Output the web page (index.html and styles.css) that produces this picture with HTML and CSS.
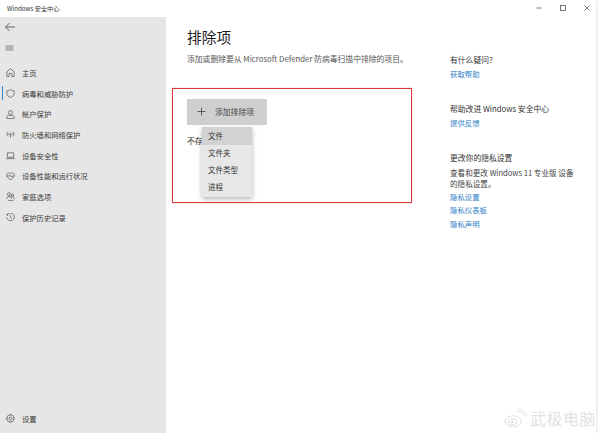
FILE: index.html
```html
<!DOCTYPE html>
<html lang="zh-CN">
<head>
<meta charset="utf-8">
<title>Windows 安全中心</title>
<link rel="stylesheet" href="styles.css">
</head>
<body>
<div class="window">
  <header class="titlebar">
    <span class="app-title">Windows 安全中心</span>
    <div class="win-controls">
      <svg class="win-icon" viewBox="0 0 10 10"><path d="M2.500 5h5" /></svg>
      <svg class="win-icon" viewBox="0 0 10 10"><rect x="2.500" y="2.500" width="5" height="5" /></svg>
      <svg class="win-icon" viewBox="0 0 10 10"><path d="M2.500 2.500l5 5M7.500 2.500l-5 5" /></svg>
    </div>
  </header>
  <div class="body">
    <nav class="sidebar">
      <div class="side-top">
        <svg class="tool-icon" viewBox="0 0 12 12"><path d="M11 6H1.500M5.500 2L1.500 6l4 4" /></svg>
        <svg class="tool-icon menu-icon" viewBox="0 0 12 12"><path d="M1.500 4h8M1.500 6h8M1.500 8h8" /></svg>
      </div>
      <ul class="nav-list">
        <li class="nav-item">
          <svg class="nav-icon" viewBox="0 0 10 10"><path d="M1 9.500V4.200L5 .8l4 3.400v5.300H6.500V6h-3v3.500z" /></svg>
          <span>主页</span>
        </li>
        <li class="nav-item active">
          <svg class="nav-icon" viewBox="0 0 10 10"><path d="M5 .7c1.200 1 2.600 1.400 4 1.400v3c0 2-1.700 3.400-4 4.300-2.300-.9-4-2.300-4-4.300v-3c1.400 0 2.800-.4 4-1.400z" /></svg>
          <span>病毒和威胁防护</span>
        </li>
        <li class="nav-item">
          <svg class="nav-icon" viewBox="0 0 10 10"><circle cx="5" cy="2.800" r="2.200" /><path d="M1 9.500V7.700c0-1 .8-1.700 1.800-1.700h4.400c1 0 1.800.7 1.800 1.700v1.800z" /></svg>
          <span>帐户保护</span>
        </li>
        <li class="nav-item">
          <svg class="nav-icon" viewBox="0 0 10 10"><path d="M5 3.500v5M2 2C.8 3.400.8 5.600 2 7M8 2c1.200 1.400 1.200 3.600 0 5M3.500 3.200c-.6.8-.6 1.800 0 2.600M6.500 3.200c.6.8.6 1.800 0 2.600" /></svg>
          <span>防火墙和网络保护</span>
        </li>
        <li class="nav-item">
          <svg class="nav-icon" viewBox="0 0 10 10"><path d="M1.500 2h7v5h-7zM0 8.500h10" /></svg>
          <span>设备安全性</span>
        </li>
        <li class="nav-item">
          <svg class="nav-icon" viewBox="0 0 10 10"><path d="M5 9L1.200 5.200C-.3 3.500 1 1 3 1c.9 0 1.600.4 2 1 .4-.6 1.100-1 2-1 2 0 3.300 2.500 1.800 4.200zM.8 4.500h2.700l1-1 1.200 2 .8-1h2.700" /></svg>
          <span>设备性能和运行状况</span>
        </li>
        <li class="nav-item">
          <svg class="nav-icon" viewBox="0 0 10 10"><circle cx="3.300" cy="2.500" r="1.700" /><circle cx="7.200" cy="3.500" r="1.300" /><path d="M.7 7.500C.7 6 1.800 5 3.300 5s2.600 1 2.600 2.500M5.500 5.500c1.700-.8 3.800 0 3.800 2M2 9c2 .8 4.500.8 6.500-.2" /></svg>
          <span>家庭选项</span>
        </li>
        <li class="nav-item">
          <svg class="nav-icon" viewBox="0 0 10 10"><path d="M1.200 2.200A4.300 4.300 0 1 1 .7 5M1 .8v1.700h1.700M5 2.600V5l1.700 1.200" /></svg>
          <span>保护历史记录</span>
        </li>
      </ul>
      <div class="nav-item settings">
        <svg class="nav-icon" viewBox="0 0 10 10"><circle cx="5" cy="5" r="1.500" /><path d="M4.200.6h1.600l.3 1.400 1.300-.6 1.100 1.100-.6 1.300 1.400.4v1.600l-1.400.3.600 1.300-1.100 1.100-1.300-.6-.3 1.400H4.200l-.4-1.400-1.300.6-1.100-1.100.6-1.300L.6 5.800V4.200L2 3.800l-.6-1.300 1.100-1.100 1.300.6z" /></svg>
        <span>设置</span>
      </div>
    </nav>
    <main class="content">
      <section class="main-col">
        <h1 class="page-title">排除项</h1>
        <p class="page-desc">添加或删除要从 Microsoft Defender 防病毒扫描中排除的项目。</p>
        <div class="add-row">
          <button class="add-btn">
            <svg class="plus" viewBox="0 0 9 9"><path d="M4.500.5v8M.5 4.500h8" /></svg>
            <span>添加排除项</span>
          </button>
          <ul class="menu">
            <li class="menu-item current">文件</li>
            <li class="menu-item">文件夹</li>
            <li class="menu-item">文件类型</li>
            <li class="menu-item">进程</li>
          </ul>
        </div>
        <p class="empty">不存在任何排除项</p>
      </section>
      <aside class="side-col">
        <div class="info">
          <h2 class="info-title">有什么疑问?</h2>
          <a class="info-link">获取帮助</a>
        </div>
        <div class="info">
          <h2 class="info-title">帮助改进 Windows 安全中心</h2>
          <a class="info-link">提供反馈</a>
        </div>
        <div class="info">
          <h2 class="info-title">更改你的隐私设置</h2>
          <p class="info-text">查看和更改 Windows 11 专业版 设备的隐私设置。</p>
          <a class="info-link">隐私设置</a>
          <a class="info-link">隐私仪表板</a>
          <a class="info-link">隐私声明</a>
        </div>
      </aside>
    </main>
  </div>
  <div class="red-box"></div>
  <div class="watermark">
    <svg class="weibo" viewBox="0 0 24 20"><ellipse cx="9.500" cy="13" rx="8.500" ry="5.800" /><ellipse cx="9" cy="13.500" rx="4.500" ry="3" /><circle cx="8.500" cy="13.800" r="1.200" /><path d="M14 3c3-1 6 .5 6.500 3.500M15 .8c4.500-.7 8 2.500 8 6.700" /></svg>
    <span>武极电脑</span>
  </div>
</div>
</body>
</html>
```

FILE: styles.css
```css
* { box-sizing: border-box; }
html, body { margin: 0; padding: 0; }
body {
  width: 600px;
  height: 433px;
  overflow: hidden;
  background: #fff;
  font-family: "Noto Sans CJK SC", "Noto Sans", sans-serif;
  color: #333;
}
ul { list-style: none; margin: 0; padding: 0; }
p, h1, h2 { margin: 0; font-weight: 400; }

.window {
  position: relative;
  width: 596px;
  height: 433px;
  display: flex;
  flex-direction: column;
  box-shadow: 1px 0 2px #e4e4e4;
}

.titlebar {
  height: 17px;
  flex: none;
  display: flex;
  align-items: center;
  justify-content: space-between;
  padding: 0 4px 0 7px;
}
.app-title { font-size: 6.200px; color: #333; line-height: 17px; }
.win-controls { display: flex; gap: 14px; margin-top: -1px; }
.win-icon {
  width: 10px;
  height: 10px;
  fill: none;
  stroke: #666;
  stroke-width: 0.9;
}

.body { flex: 1; display: flex; min-height: 0; }

.sidebar {
  width: 166px;
  flex: none;
  background: #e6e6e6;
  display: flex;
  flex-direction: column;
  padding-top: 4px;
  padding-bottom: 4px;
}
.side-top {
  display: flex;
  flex-direction: column;
  gap: 8.500px;
  padding-left: 4px;
}
.tool-icon {
  width: 12px;
  height: 12px;
  fill: none;
  stroke: #555;
  stroke-width: 0.9;
}
.menu-icon { stroke: #777; }
.nav-list { margin-top: 9px; }
.nav-item {
  height: 20.700px;
  display: flex;
  align-items: center;
  gap: 7px;
  padding-left: 6px;
  font-size: 7.300px;
  color: #3a3a3a;
  position: relative;
}
.nav-item.active::before {
  content: "";
  position: absolute;
  left: 2px;
  top: 3px;
  bottom: 4px;
  width: 1px;
  background: #2f86d0;
}
.nav-icon {
  width: 9px;
  height: 9px;
  flex: none;
  fill: none;
  stroke: #555;
  stroke-width: 0.8;
}
.settings { margin-top: auto; }

.content { flex: 1; display: flex; min-width: 0; }
.main-col {
  width: 284px;
  flex: none;
  padding: 10px 0 0 21px;
}
.page-title {
  font-size: 14.700px;
  line-height: 20px;
  color: #1a1a1a;
}
.page-desc {
  margin-top: 6px;
  font-size: 7.800px;
  line-height: 11px;
  color: #555;
  white-space: nowrap;
}
.add-row { position: relative; margin-top: 35px; }
.add-btn {
  width: 80px;
  height: 25.500px;
  border: 0;
  padding: 0 0 0 10px;
  background: #cfcfcf;
  display: flex;
  align-items: center;
  gap: 9px;
  font-family: inherit;
  font-size: 7.800px;
  color: #444;
}
.plus {
  width: 9px;
  height: 9px;
  fill: none;
  stroke: #444;
  stroke-width: 0.8;
  flex: none;
}
.menu {
  position: absolute;
  left: 15px;
  top: 28px;
  width: 50px;
  height: 70px;
  background: #e7e7e7;
  box-shadow: 0 2px 5px rgba(0, 0, 0, 0.3);
  border-radius: 1px;
}
.menu-item {
  height: 16.800px;
  padding-left: 6px;
  font-size: 7.500px;
  line-height: 16.800px;
  color: #333;
}
.menu-item.current { height: 18px; line-height: 18.500px; background: #d2d2d2; }
.empty {
  margin-top: 10px;
  font-size: 7.800px;
  line-height: 11px;
  color: #222;
  white-space: nowrap;
}

.side-col { flex: 1; padding: 37px 0 0 0; }
.info { margin-bottom: 24.500px; width: 128px; }
.info-title {
  font-size: 7.800px;
  line-height: 11px;
  color: #333;
  white-space: nowrap;
}
.info-text {
  margin-top: 4px;
  margin-bottom: -1px;
  font-size: 7.600px;
  line-height: 11px;
  color: #444;
}
.info-link {
  display: block;
  margin-top: 2.500px;
  font-size: 7.400px;
  line-height: 11px;
  color: #2f7fc8;
}

.red-box {
  position: absolute;
  left: 172px;
  top: 88px;
  width: 240px;
  height: 115px;
  border: 1px solid #d83a3a;
  box-shadow: 0 0 1px #e88;
}

.watermark {
  position: absolute;
  left: 504px;
  top: 408px;
  display: flex;
  align-items: center;
  gap: 3px;
  font-size: 16px;
  line-height: 20px;
  letter-spacing: 0.5px;
  color: #e2e2e2;
  white-space: nowrap;
}
.weibo {
  width: 23px;
  height: 19px;
  fill: none;
  stroke: #dcdcdc;
  stroke-width: 1;
}
```
